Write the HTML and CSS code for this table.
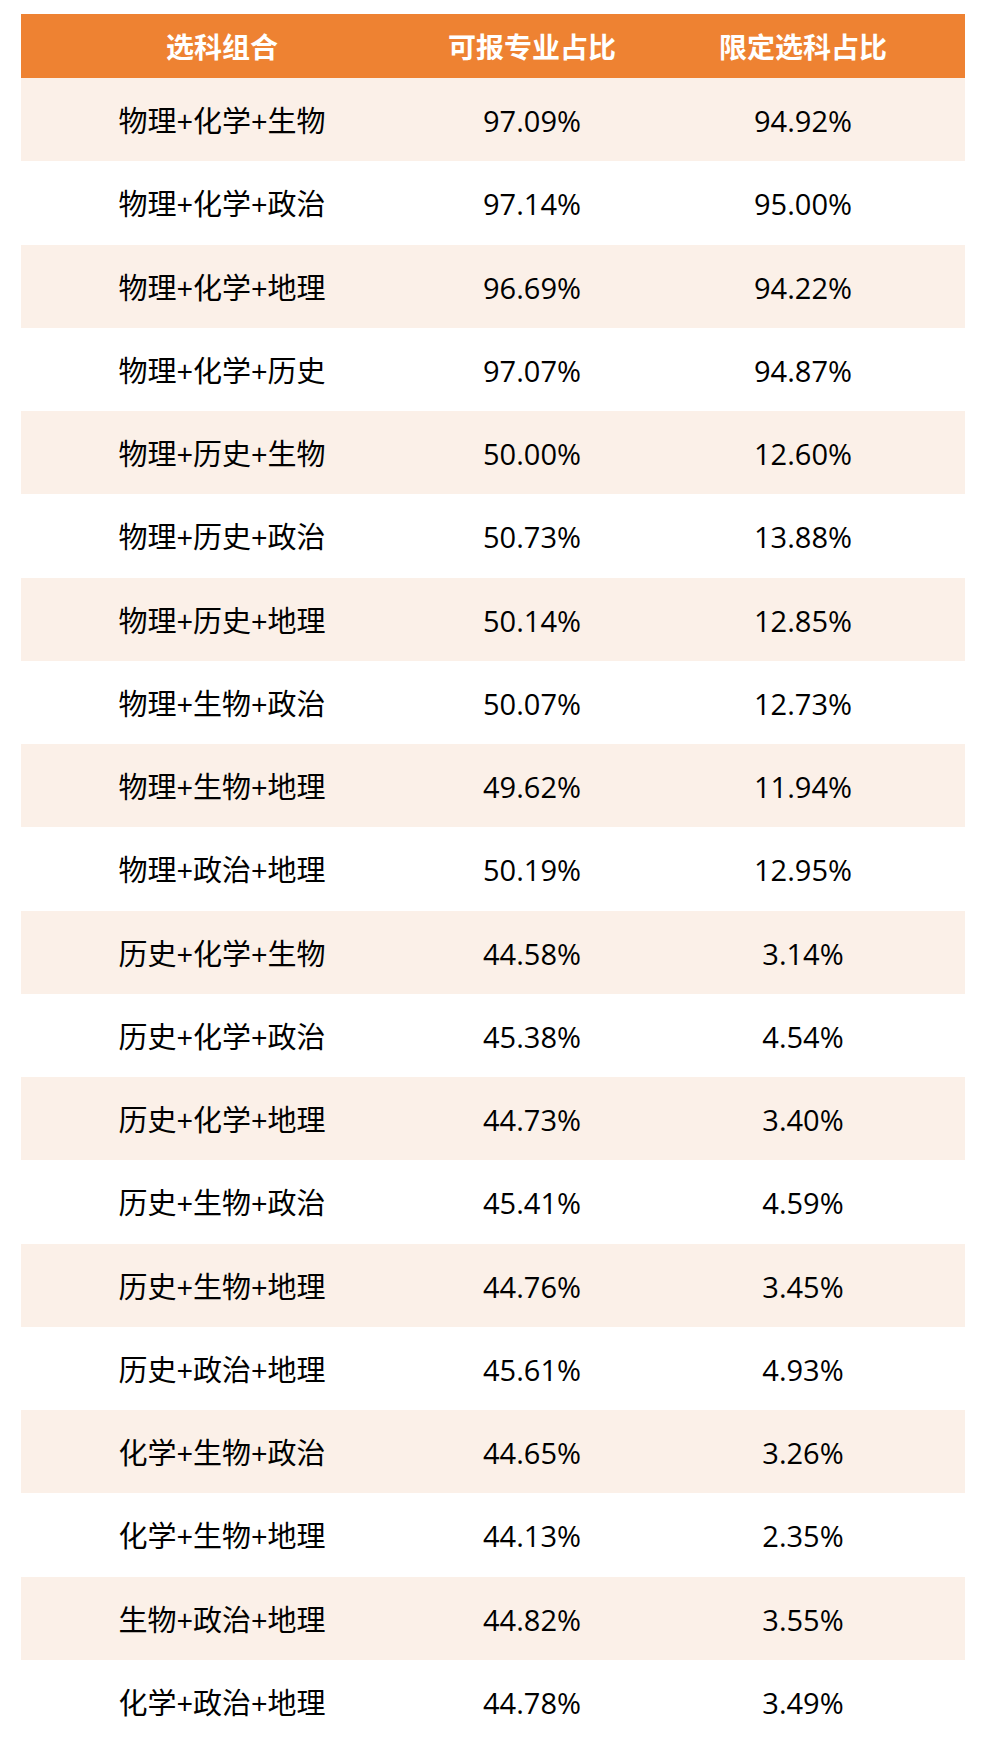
FILE: index.html
```html
<!DOCTYPE html>
<html lang="zh-CN">
<head>
<meta charset="utf-8">
<title>选科组合</title>
<link rel="stylesheet" href="styles.css">
</head>
<body>
<div class="wrap">
  <div class="table">
    <div class="row head"><div class="c1">选科组合</div><div class="c2">可报专业占比</div><div class="c3">限定选科占比</div></div>
    <div class="row alt"><div class="c1">物理+化学+生物</div><div class="c2">97.09%</div><div class="c3">94.92%</div></div>
    <div class="row"><div class="c1">物理+化学+政治</div><div class="c2">97.14%</div><div class="c3">95.00%</div></div>
    <div class="row alt"><div class="c1">物理+化学+地理</div><div class="c2">96.69%</div><div class="c3">94.22%</div></div>
    <div class="row"><div class="c1">物理+化学+历史</div><div class="c2">97.07%</div><div class="c3">94.87%</div></div>
    <div class="row alt"><div class="c1">物理+历史+生物</div><div class="c2">50.00%</div><div class="c3">12.60%</div></div>
    <div class="row"><div class="c1">物理+历史+政治</div><div class="c2">50.73%</div><div class="c3">13.88%</div></div>
    <div class="row alt"><div class="c1">物理+历史+地理</div><div class="c2">50.14%</div><div class="c3">12.85%</div></div>
    <div class="row"><div class="c1">物理+生物+政治</div><div class="c2">50.07%</div><div class="c3">12.73%</div></div>
    <div class="row alt"><div class="c1">物理+生物+地理</div><div class="c2">49.62%</div><div class="c3">11.94%</div></div>
    <div class="row"><div class="c1">物理+政治+地理</div><div class="c2">50.19%</div><div class="c3">12.95%</div></div>
    <div class="row alt"><div class="c1">历史+化学+生物</div><div class="c2">44.58%</div><div class="c3">3.14%</div></div>
    <div class="row"><div class="c1">历史+化学+政治</div><div class="c2">45.38%</div><div class="c3">4.54%</div></div>
    <div class="row alt"><div class="c1">历史+化学+地理</div><div class="c2">44.73%</div><div class="c3">3.40%</div></div>
    <div class="row"><div class="c1">历史+生物+政治</div><div class="c2">45.41%</div><div class="c3">4.59%</div></div>
    <div class="row alt"><div class="c1">历史+生物+地理</div><div class="c2">44.76%</div><div class="c3">3.45%</div></div>
    <div class="row"><div class="c1">历史+政治+地理</div><div class="c2">45.61%</div><div class="c3">4.93%</div></div>
    <div class="row alt"><div class="c1">化学+生物+政治</div><div class="c2">44.65%</div><div class="c3">3.26%</div></div>
    <div class="row"><div class="c1">化学+生物+地理</div><div class="c2">44.13%</div><div class="c3">2.35%</div></div>
    <div class="row alt"><div class="c1">生物+政治+地理</div><div class="c2">44.82%</div><div class="c3">3.55%</div></div>
    <div class="row"><div class="c1">化学+政治+地理</div><div class="c2">44.78%</div><div class="c3">3.49%</div></div>
  </div>
</div>
</body>
</html>
```
FILE: styles.css
```css
html, body {
  margin: 0;
  padding: 0;
  background: #ffffff;
}
.wrap {
  padding: 14px 22px 0 21px;
}
.table {
  width: 944px;
  display: flex;
  flex-direction: column;
  font-family: "Open Sans", "Noto Sans CJK SC", sans-serif;
  color: #000000;
}
.row {
  display: grid;
  grid-template-columns: 402px 218px 324px;
  height: 83.25px;
  align-items: center;
  font-size: 29px;
}
.row > div {
  text-align: center;
  line-height: 1;
  padding-top: 2px;
}
.head {
  height: 64px;
  background: #ee8232;
  color: #ffffff;
  font-family: "Noto Sans CJK SC", sans-serif;
  font-weight: 700;
  font-size: 28px;
}
.head > div {
  padding-top: 0;
}
.alt {
  background: #fbf0e8;
}
```
